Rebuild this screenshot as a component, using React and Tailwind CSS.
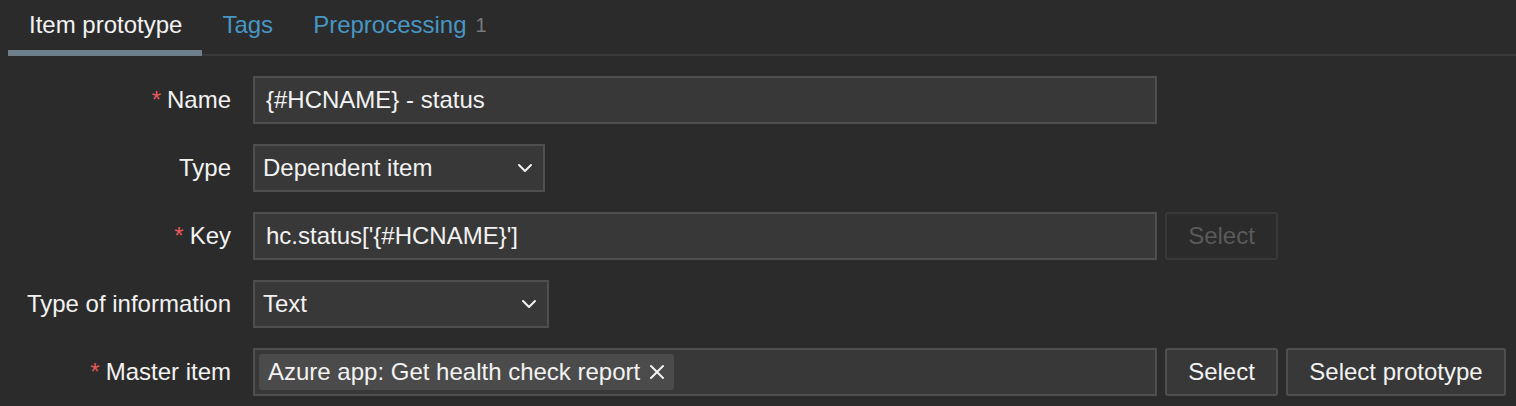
import React from 'react';

const font = { fontFamily: '"Liberation Sans", Arial, sans-serif' };

const Chevron = () => (
  <svg width="16" height="10" viewBox="0 0 16 10" fill="none" className="shrink-0">
    <path d="M2 2l6 6 6-6" stroke="#f2f2f2" strokeWidth="2" strokeLinecap="round" strokeLinejoin="round" />
  </svg>
);

const Label = ({ required, children }) => (
  <div className="w-[231px] shrink-0 text-right text-[#f2f2f2] whitespace-nowrap">
    {required && <span className="text-[#e45959] mr-[6px]">*</span>}
    {children}
  </div>
);

const Row = ({ label, required, children }) => (
  <div className="flex items-center gap-[22px] h-[48px]">
    <Label required={required}>{label}</Label>
    <div className="flex items-center gap-[8px]">{children}</div>
  </div>
);

const TextBox = ({ value }) => (
  <div className="w-[904px] h-[48px] flex items-center px-[11px] bg-[#383838] border-2 border-[#4f4f4f] text-[#f2f2f2]">
    {value}
  </div>
);

const SelectBox = ({ value, width }) => (
  <div className={`${width} h-[48px] flex items-center justify-between pl-[8px] pr-[10px] bg-[#383838] border-2 border-[#4f4f4f] text-[#f2f2f2]`}>
    <span>{value}</span>
    <Chevron />
  </div>
);

const Button = ({ children, disabled, width }) => (
  <button
    className={
      disabled
        ? `${width} h-[48px] rounded-[3px] border-2 border-[#383838] bg-[#2b2b2b] text-[#5a5a5a]`
        : `${width} h-[48px] rounded-[3px] border-2 border-[#4f4f4f] bg-[#383838] text-[#f2f2f2]`
    }
  >
    {children}
  </button>
);

export default function App() {
  return (
    <div className="w-[1516px] h-[406px] bg-[#2b2b2b] text-[24px] overflow-hidden" style={font}>
      {/* Tabs */}
      <div className="ml-[8px] flex border-b-2 border-[#383838]">
        <div className="h-[56px] -mb-[2px] px-[20px] pl-[21px] flex items-center pb-[1px] border-b-[6px] border-[#6d7f8b] text-[#f2f2f2]">
          Item prototype
        </div>
        <div className="h-[56px] -mb-[2px] px-[20px] flex items-center pb-[1px] border-b-[6px] border-transparent text-[#4796c4]">
          Tags
        </div>
        <div className="h-[56px] -mb-[2px] px-[20px] flex items-center pb-[1px] border-b-[6px] border-transparent text-[#4796c4]">
          Preprocessing
          <span className="ml-[9px] text-[20px] text-[#7a7a7a]">1</span>
        </div>
      </div>

      {/* Form */}
      <div className="flex flex-col gap-[20px] pt-[20px]">
        <Row label="Name" required>
          <TextBox value="{#HCNAME} - status" />
        </Row>
        <Row label="Type">
          <SelectBox value="Dependent item" width="w-[292px]" />
        </Row>
        <Row label="Key" required>
          <TextBox value="hc.status['{#HCNAME}']" />
          <Button disabled width="w-[113px]">Select</Button>
        </Row>
        <Row label="Type of information">
          <SelectBox value="Text" width="w-[296px]" />
        </Row>
        <Row label="Master item" required>
          <div className="w-[904px] h-[48px] flex items-center px-[4px] bg-[#383838] border-2 border-[#4f4f4f]">
            <div className="h-[36px] flex items-center gap-[9px] pl-[9px] pr-[9px] rounded-[3px] bg-[#4b4b4b] text-[#f2f2f2]">
              <span>Azure app: Get health check report</span>
              <svg width="16" height="16" viewBox="0 0 16 16">
                <path d="M2 2l12 12M14 2L2 14" stroke="#f2f2f2" strokeWidth="2" strokeLinecap="round" />
              </svg>
            </div>
          </div>
          <Button width="w-[113px]">Select</Button>
          <Button width="w-[220px]">Select prototype</Button>
        </Row>
      </div>
    </div>
  );
}
